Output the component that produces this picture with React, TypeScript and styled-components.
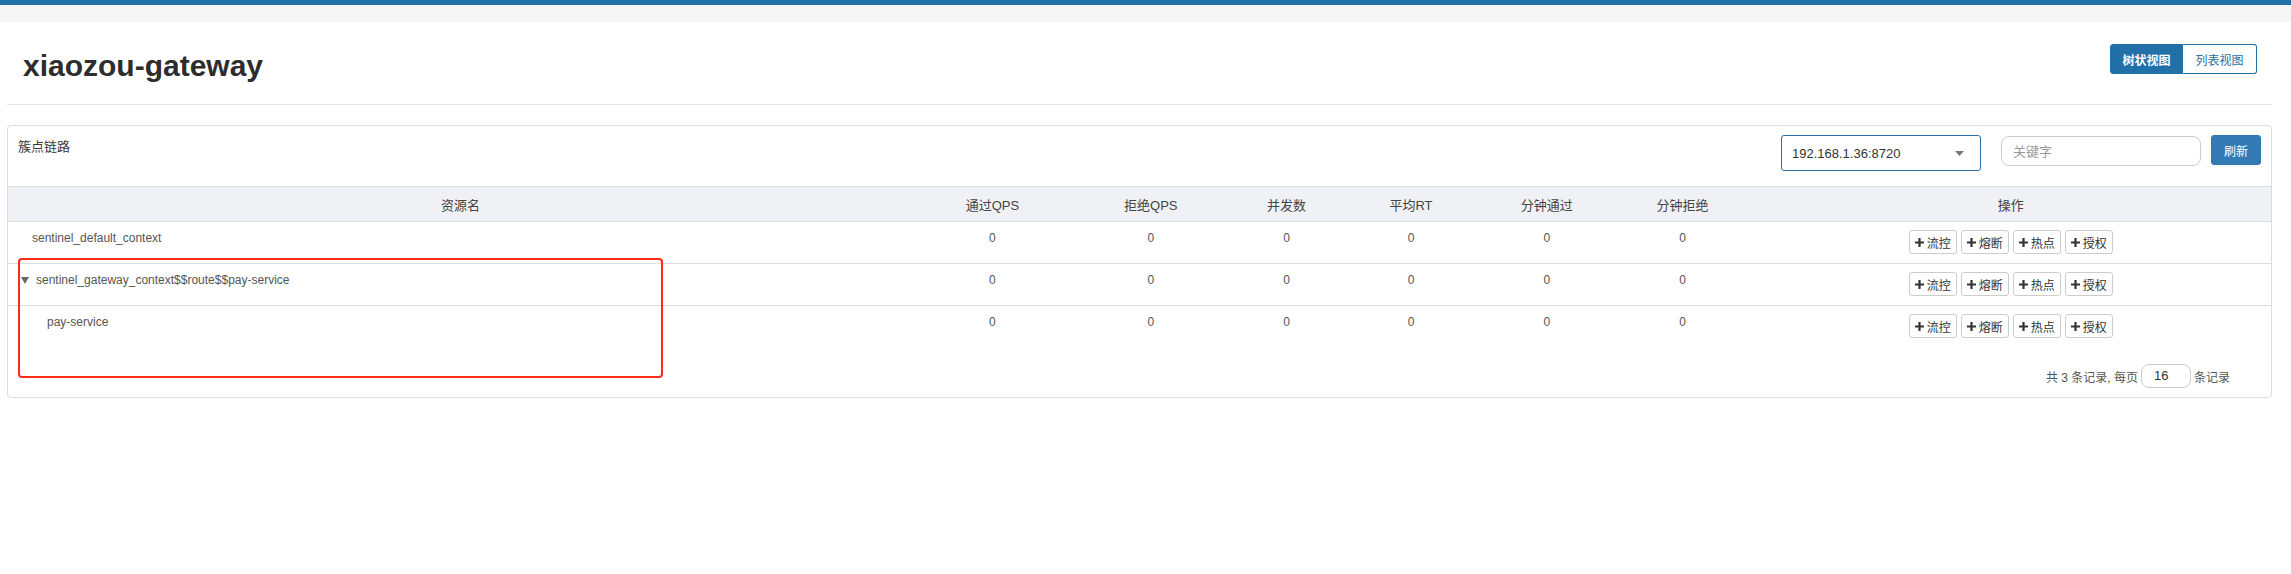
import React from 'react';
import styled, { createGlobalStyle } from 'styled-components';

const GlobalStyle = createGlobalStyle`
  html, body {
    margin: 0;
    padding: 0;
    background: #fff;
  }
  body {
    font-family: "Liberation Sans", "Noto Sans CJK SC", sans-serif;
    font-size: 13px;
    color: #333;
  }
  * {
    box-sizing: border-box;
  }
`;

const TopBar = styled.div`
  height: 5px;
  background: #2270a8;
`;

const SubBar = styled.div`
  height: 17px;
  background: #f6f6f6;
`;

const Main = styled.div`
  padding: 0 19px 0 7px;
`;

const PageHeader = styled.div`
  display: flex;
  justify-content: space-between;
  align-items: flex-start;
  height: 83px;
  border-bottom: 1px solid #e5e5e5;
`;

const Title = styled.h1`
  margin: 27px 0 0 16px;
  font-size: 30px;
  line-height: 33px;
  font-weight: bold;
  color: #2d2d2d;
`;

const ViewToggle = styled.div`
  display: flex;
  margin: 22px 15px 0 0;
`;

const ToggleButton = styled.button<{ $active?: boolean; $first?: boolean }>`
  height: 30px;
  width: ${(p) => (p.$first ? '73px' : '74px')};
  padding: 0;
  font-family: inherit;
  font-size: 12px;
  font-weight: ${(p) => (p.$active ? 'bold' : 'normal')};
  color: ${(p) => (p.$active ? '#fff' : '#2a6fa8')};
  background: ${(p) => (p.$active ? '#2270a8' : '#fff')};
  border: 1px solid #2270a8;
  border-radius: ${(p) => (p.$first ? '3px 0 0 3px' : '0 3px 3px 0')};
  ${(p) => (p.$first ? '' : 'border-left: none;')}
`;

const Panel = styled.div`
  position: relative;
  margin-top: 20px;
  border: 1px solid #ddd;
  border-radius: 4px;
`;

const PanelHeading = styled.div`
  display: flex;
  align-items: flex-start;
  height: 60px;
  padding: 9px 10px 0 10px;
`;

const HeadingTitle = styled.div`
  flex: 1;
  margin-top: 2px;
  font-size: 13px;
  line-height: 20px;
  color: #3a3a3a;
`;

const MachineSelect = styled.div`
  display: flex;
  align-items: center;
  justify-content: space-between;
  width: 200px;
  height: 36px;
  padding: 0 16px 0 10px;
  border: 1px solid #2b6fad;
  border-radius: 3px;
  font-size: 13px;
  color: #333;
`;

const SearchInput = styled.input`
  width: 200px;
  height: 30px;
  margin: 1px 0 0 20px;
  padding: 0 11px;
  border: 1px solid #ccc;
  border-radius: 8px;
  font-family: inherit;
  font-size: 13px;
  color: #333;
  outline: none;

  &::placeholder {
    color: #999;
  }
`;

const RefreshButton = styled.button`
  width: 50px;
  height: 30px;
  margin-left: 10px;
  padding: 0;
  border: 1px solid #2e78b5;
  border-radius: 3px;
  background: #337ab7;
  color: #fff;
  font-family: inherit;
  font-size: 12px;
`;

const columns = '40% 7% 7% 5% 6% 6% 6% 23%';

const HeadRow = styled.div`
  display: grid;
  grid-template-columns: ${columns};
  height: 36px;
  border-top: 1px solid #ddd;
  border-bottom: 1px solid #ddd;
  background: #f0f1f5;
`;

const HeadCell = styled.div`
  display: flex;
  align-items: center;
  justify-content: center;
  font-size: 13px;
  color: #444;
`;

const Row = styled.div<{ $last?: boolean }>`
  display: grid;
  grid-template-columns: ${columns};
  height: 42px;
  border-bottom: ${(p) => (p.$last ? 'none' : '1px solid #ddd')};
`;

const Cell = styled.div`
  padding-top: 8px;
  font-size: 12px;
  line-height: 17px;
  color: #555;
  text-align: center;
`;

const NameCell = styled.div<{ $indent: number }>`
  display: flex;
  align-items: flex-start;
  padding: 8px 0 0 ${(p) => p.$indent}px;
  font-size: 12px;
  line-height: 17px;
  color: #555;
`;

const Arrow = styled.svg`
  margin: 5px 7px 0 0;
  flex: none;
`;

const ActionCell = styled.div`
  display: flex;
  justify-content: center;
  gap: 4px;
  padding-top: 8px;
`;

const ActionButton = styled.button`
  display: flex;
  align-items: center;
  gap: 3px;
  height: 24px;
  padding: 0 5px;
  border: 1px solid #ccc;
  border-radius: 3px;
  background: #fff;
  font-family: inherit;
  font-size: 12px;
  color: #333;
`;

const Footer = styled.div`
  display: flex;
  justify-content: flex-end;
  align-items: center;
  padding: 16px 41px 9px 0;
  font-size: 12px;
  color: #555;
`;

const PageSize = styled.div`
  width: 50px;
  height: 24px;
  margin: 0 3px;
  padding-left: 12px;
  border: 1px solid #ccc;
  border-radius: 8px;
  font-size: 13px;
  line-height: 22px;
  color: #333;
`;

const Highlight = styled.div`
  position: absolute;
  left: 10px;
  top: 132px;
  width: 645px;
  height: 120px;
  border: 2px solid #ff2a1a;
  border-radius: 4px;
  pointer-events: none;
`;

const PlusIcon = () => (
  <svg width="9" height="9" viewBox="0 0 9 9">
    <path d="M3.4 0h2.2v3.4H9v2.2H5.6V9H3.4V5.6H0V3.4h3.4z" fill="#333" />
  </svg>
);

type Node = {
  name: string;
  indent: number;
  expandable?: boolean;
};

const nodes: Node[] = [
  { name: 'sentinel_default_context', indent: 24 },
  { name: 'sentinel_gateway_context$$route$$pay-service', indent: 13, expandable: true },
  { name: 'pay-service', indent: 39 },
];

const headers = ['资源名', '通过QPS', '拒绝QPS', '并发数', '平均RT', '分钟通过', '分钟拒绝', '操作'];
const actions = ['流控', '熔断', '热点', '授权'];

export default function App() {
  return (
    <>
      <GlobalStyle />
      <TopBar />
      <SubBar />
      <Main>
        <PageHeader>
          <Title>xiaozou-gateway</Title>
          <ViewToggle>
            <ToggleButton $active $first>树状视图</ToggleButton>
            <ToggleButton>列表视图</ToggleButton>
          </ViewToggle>
        </PageHeader>
        <Panel>
          <PanelHeading>
            <HeadingTitle>簇点链路</HeadingTitle>
            <MachineSelect>
              <span>192.168.1.36:8720</span>
              <svg width="9" height="5" viewBox="0 0 9 5">
                <path d="M0 0h9L4.5 5z" fill="#777" />
              </svg>
            </MachineSelect>
            <SearchInput placeholder="关键字" />
            <RefreshButton>刷新</RefreshButton>
          </PanelHeading>
          <HeadRow>
            {headers.map((h) => (
              <HeadCell key={h}>{h}</HeadCell>
            ))}
          </HeadRow>
          {nodes.map((n, i) => (
            <Row key={n.name} $last={i === nodes.length - 1}>
              <NameCell $indent={n.indent}>
                {n.expandable && (
                  <Arrow width="8" height="7" viewBox="0 0 8 7">
                    <path d="M0 0h8L4 7z" fill="#666" />
                  </Arrow>
                )}
                {n.name}
              </NameCell>
              {[0, 0, 0, 0, 0, 0].map((v, j) => (
                <Cell key={j}>{v}</Cell>
              ))}
              <ActionCell>
                {actions.map((a) => (
                  <ActionButton key={a}>
                    <PlusIcon />
                    {a}
                  </ActionButton>
                ))}
              </ActionCell>
            </Row>
          ))}
          <Footer>
            共 3 条记录, 每页
            <PageSize>16</PageSize>
            条记录
          </Footer>
          <Highlight />
        </Panel>
      </Main>
    </>
  );
}
